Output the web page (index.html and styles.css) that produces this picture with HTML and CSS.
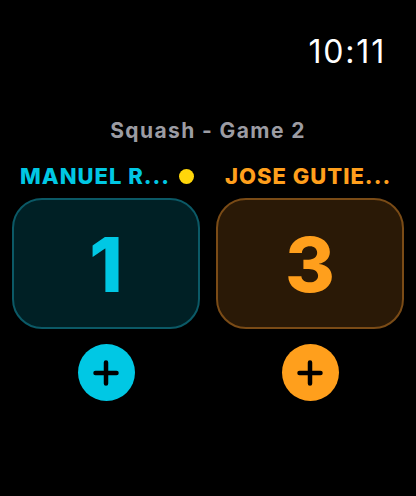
FILE: index.html
```html
<!DOCTYPE html>
<html lang="en">
<head>
  <meta charset="UTF-8">
  <title>Squash</title>
  <link rel="stylesheet" href="styles.css">
</head>
<body>
  <div class="screen">
    <div class="status">
      <span class="time">10:11</span>
    </div>

    <h1 class="title">Squash - Game 2</h1>

    <div class="players">
      <div class="player home">
        <div class="name">
          <span>MANUEL R...</span>
          <span class="serve"></span>
        </div>
        <div class="score">1</div>
        <button class="add" aria-label="Add point">
          <svg width="26" height="26" viewBox="0 0 26 26">
            <path d="M13 2.5v21M2.5 13h21" stroke="#000" stroke-width="4.5" stroke-linecap="round" fill="none"/>
          </svg>
        </button>
      </div>

      <div class="player away">
        <div class="name">
          <span>JOSE GUTIE...</span>
        </div>
        <div class="score">3</div>
        <button class="add" aria-label="Add point">
          <svg width="26" height="26" viewBox="0 0 26 26">
            <path d="M13 2.5v21M2.5 13h21" stroke="#000" stroke-width="4.5" stroke-linecap="round" fill="none"/>
          </svg>
        </button>
      </div>
    </div>
  </div>
</body>
</html>
```

FILE: styles.css
```css
body {
  margin: 0;
  padding: 0;
  background-color: #000;
  font-family: Inter, "Open Sans", sans-serif;
}

.screen {
  width: 416px;
  height: 496px;
  box-sizing: border-box;
  padding: 0 12px;
}

.status {
  display: flex;
  justify-content: flex-end;
  padding: 33px 18px 0 0;
  height: 37px;
}

.time {
  color: #fff;
  font-size: 32px;
  font-weight: 400;
  line-height: 37px;
  letter-spacing: 1.8px;
}

.title {
  margin: 48px 0 0;
  text-align: center;
  color: #9c9ca3;
  font-size: 21px;
  font-weight: 700;
  line-height: 26px;
  letter-spacing: 1.4px;
}

.players {
  display: grid;
  grid-template-columns: 188px 188px;
  gap: 16px;
  margin-top: 18px;
}

.player {
  display: flex;
  flex-direction: column;
  align-items: center;
}

.name {
  align-self: stretch;
  display: flex;
  align-items: center;
  gap: 9px;
  padding-left: 8px;
  height: 28px;
  font-size: 22px;
  font-weight: 800;
  letter-spacing: 1px;
}

.serve {
  width: 15px;
  height: 15px;
  border-radius: 50%;
  background-color: #ffd60a;
}

.score {
  width: 100%;
  height: 131px;
  box-sizing: border-box;
  margin-top: 8px;
  border: 2.5px solid;
  border-radius: 30px;
  display: flex;
  align-items: center;
  justify-content: center;
  font-size: 76px;
  font-weight: 800;
}

.add {
  margin-top: 15px;
  width: 57px;
  height: 57px;
  border: none;
  border-radius: 50%;
  padding: 0;
  display: flex;
  align-items: center;
  justify-content: center;
  cursor: pointer;
}

.home .name,
.home .score {
  color: #00c8e4;
}

.home .score {
  background-color: #002025;
  border-color: #0b5966;
}

.home .add {
  background-color: #00c8e4;
}

.away .name,
.away .score {
  color: #ff9f1c;
}

.away .name {
  padding-left: 9px;
}

.away .score {
  background-color: #2a1906;
  border-color: #7a4b16;
}

.away .add {
  background-color: #ff9f1c;
}
```
